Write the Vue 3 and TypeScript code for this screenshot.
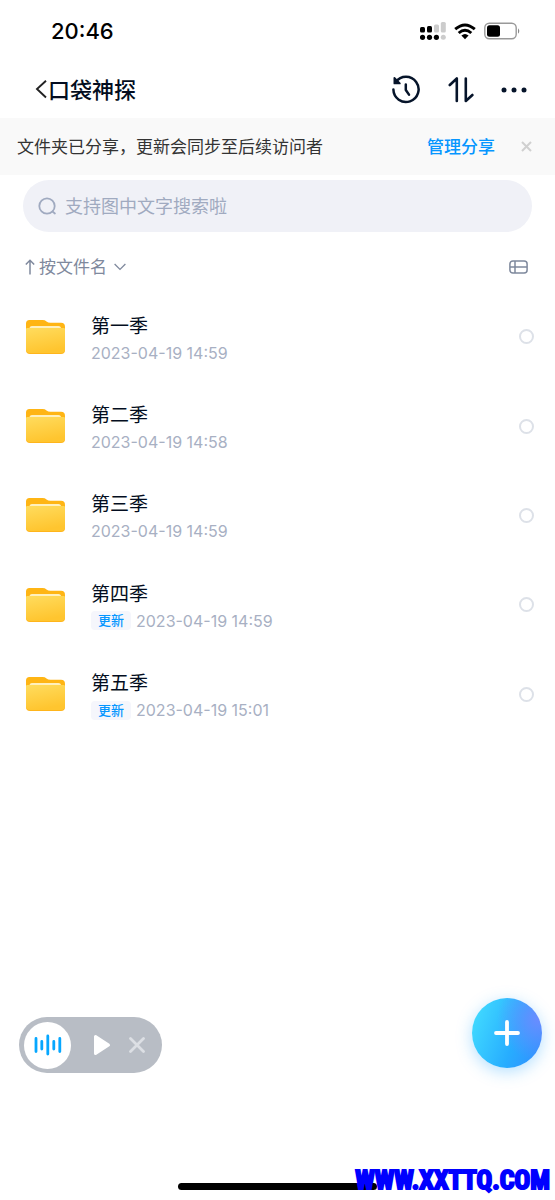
<script setup lang="ts">
import { ref } from 'vue'

interface Folder {
  name: string
  date: string
  updated: boolean
}

const folders: Folder[] = [
  { name: '第一季', date: '2023-04-19 14:59', updated: false },
  { name: '第二季', date: '2023-04-19 14:58', updated: false },
  { name: '第三季', date: '2023-04-19 14:59', updated: false },
  { name: '第四季', date: '2023-04-19 14:59', updated: true },
  { name: '第五季', date: '2023-04-19 15:01', updated: true },
]

const selected = ref<string[]>([])
const keyword = ref('')
const sortBy = ref('name')
</script>

<template>
  <div class="page">
    <div class="status">
      <time class="clock">20:46</time>
      <div class="signals">
        <svg width="26" height="18" viewBox="0 0 26 18" aria-hidden="true">
          <g fill="#000">
            <rect x="0" y="5" width="5" height="5.5" rx="1.5" />
            <rect x="7" y="4" width="5" height="6.5" rx="1.5" />
            <circle cx="2.5" cy="15.3" r="2.6" />
            <circle cx="9.5" cy="15.3" r="2.6" />
            <circle cx="16.4" cy="15.3" r="2.6" />
          </g>
          <g fill="#ccc">
            <rect x="14" y="2.5" width="5" height="8" rx="1.5" />
            <rect x="20.8" y="0" width="5" height="10.5" rx="1.5" />
            <circle cx="23.3" cy="15.3" r="2.5" />
          </g>
        </svg>
        <svg width="22" height="17" viewBox="0 0 22 17" aria-hidden="true">
          <g fill="none" stroke="#000" stroke-width="2.9">
            <path d="M1.2 6.2Q11 -2.4 20.8 6.2" />
            <path d="M4.7 10Q11 4.4 17.3 10" />
          </g>
          <path d="M7.4 12.5Q11 9.4 14.6 12.5L11 16.3Z" fill="#000" />
        </svg>
        <svg width="36" height="18" viewBox="0 0 36 18" aria-hidden="true">
          <rect x="0.8" y="1.2" width="31.4" height="15.6" rx="4.5" fill="#fff" stroke="#999" stroke-width="1.4" />
          <rect x="3" y="3.2" width="13" height="11.6" rx="2.5" fill="#000" />
          <path d="M34 6.2Q36.6 9 34 11.8Z" fill="#888" />
        </svg>
      </div>
    </div>

    <header class="header">
      <button class="icon-btn" type="button" aria-label="返回">
        <svg width="13" height="20" viewBox="0 0 13 20" fill="none" stroke="#222" stroke-width="1.9">
          <path d="M11 0.800L2 9l9 8.500" />
        </svg>
      </button>
      <h1 class="title">口袋神探</h1>
      <div class="actions">
        <button class="icon-btn" type="button" aria-label="历史记录">
          <svg width="30" height="30" viewBox="0 0 30 30" fill="none" stroke="#06142a" stroke-width="2.500" stroke-linecap="round" stroke-linejoin="round">
            <path d="M4.800 7A12.600 12.600 0 1 1 2.400 14.600" />
            <path d="M3.400 3v5.400h5.400z" fill="#06142a" stroke-width="1.800" />
            <path d="M14.800 9.400v5.600l3.200 4.600" />
          </svg>
        </button>
        <button class="icon-btn" type="button" aria-label="传输列表">
          <svg width="26" height="26" viewBox="0 0 26 26" fill="none" stroke="#06142a" stroke-width="2.600" stroke-linecap="round" stroke-linejoin="round">
            <path d="M1.800 8L8.800 1.500v22.500" />
            <path d="M17.800 1.500v22.500l6.600-6" />
          </svg>
        </button>
        <button class="icon-btn" type="button" aria-label="更多">
          <svg width="26" height="6" viewBox="0 0 26 6" fill="#06142a">
            <circle cx="3" cy="3" r="2.500" />
            <circle cx="13" cy="3" r="2.500" />
            <circle cx="23" cy="3" r="2.500" />
          </svg>
        </button>
      </div>
    </header>

    <div class="notice">
      <span class="notice-text">文件夹已分享，更新会同步至后续访问者</span>
      <a class="notice-link" href="#share">管理分享</a>
      <button class="icon-btn" type="button" aria-label="关闭提示">
        <svg width="11" height="11" viewBox="0 0 11 11" stroke="#d0d0d0" stroke-width="2">
          <path d="M1 1l9 9M10 1l-9 9" />
        </svg>
      </button>
    </div>

    <label class="search">
      <svg width="19" height="19" viewBox="0 0 19 19" fill="none" stroke="#a0aac0" stroke-width="1.800" stroke-linecap="round">
        <circle cx="9" cy="9" r="7.700" />
        <path d="M14.500 14.500l2.400 2" />
      </svg>
      <input v-model="keyword" class="search-input" type="text" aria-label="搜索" placeholder="支持图中文字搜索啦" />
    </label>

    <div class="toolbar">
      <svg width="10" height="16" viewBox="0 0 10 16" fill="none" stroke="#7f899d" stroke-width="1.500">
        <path d="M5 15.500V1.500M0.800 5.500L5 1.300l4.200 4.200" />
      </svg>
      <select v-model="sortBy" class="sort" aria-label="排序方式">
        <option value="name">按文件名</option>
      </select>
      <svg class="chevron" width="12" height="8" viewBox="0 0 12 8" fill="none" stroke="#7f899d" stroke-width="1.300">
        <path d="M0.600 1l5.400 5.400L11.400 1" />
      </svg>
      <button class="icon-btn view" type="button" aria-label="切换视图">
        <svg width="19" height="14" viewBox="0 0 19 14" fill="none" stroke="#7f899d" stroke-width="1.500">
          <rect x="0.900" y="0.900" width="17.200" height="12.200" rx="3" />
          <path d="M6 1v12M1 7h17" />
        </svg>
      </button>
    </div>

    <ul class="list">
      <li v-for="(folder, i) in folders" :key="folder.name">
        <label class="row" :for="`folder-${i}`">
          <svg class="folder" width="40" height="36" viewBox="0 0 40 36" aria-hidden="true">
            <defs>
              <linearGradient :id="`front-${i}`" x1="0" y1="0" x2="0.300" y2="1">
                <stop offset="0" stop-color="#ffdc5e" />
                <stop offset="1" stop-color="#ffc52f" />
              </linearGradient>
            </defs>
            <path d="M1 4.500Q1 1 4.500 1H17.500Q20 1 21.500 2.400Q23 3.800 25.500 3.800H36Q40 3.800 40 8V20H1Z" fill="#ffb514" />
            <path d="M4.500 11V9.500Q4.500 7 7 7H33.500Q36 7 36 9.500V11Z" fill="#fff0bd" />
            <path d="M1 10Q1 9 2.500 9H38.500Q40 9 40 10V31Q40 35 36 35H5Q1 35 1 31Z" fill="#ffb51b" />
            <path d="M1 10Q1 9 2.500 9H38.500Q40 9 40 10V30Q40 34 36 34H5Q1 34 1 30Z" :fill="`url(#front-${i})`" />
          </svg>
          <span class="info">
            <span class="name">{{ folder.name }}</span>
            <span class="meta">
              <span v-if="folder.updated" class="badge">更新</span>
              <time>{{ folder.date }}</time>
            </span>
          </span>
          <input :id="`folder-${i}`" v-model="selected" class="check" type="checkbox" :value="folder.name" />
        </label>
      </li>
    </ul>

    <div class="player">
      <button class="wave" type="button" aria-label="正在播放">
        <svg width="28" height="22" viewBox="0 0 28 22" stroke="#06a7ff" stroke-width="2.800" stroke-linecap="round">
          <path d="M2 4.500v13M7.800 7.500v7.500M13.800 2v18M19.800 7.500v7.500M25.800 4.500v13" />
        </svg>
      </button>
      <button class="icon-btn" type="button" aria-label="播放">
        <svg width="18" height="22" viewBox="0 0 18 22" fill="#fff" stroke="#fff" stroke-width="3" stroke-linejoin="round">
          <path d="M2.500 2.500v17L15.500 11z" />
        </svg>
      </button>
      <button class="icon-btn" type="button" aria-label="关闭播放器">
        <svg width="16" height="16" viewBox="0 0 16 16" stroke="#dcdfe4" stroke-width="2.800" stroke-linecap="round">
          <path d="M1.500 1.500l13 13M14.500 1.500l-13 13" />
        </svg>
      </button>
    </div>

    <button class="add" type="button" aria-label="新建">
      <svg width="26" height="26" viewBox="0 0 26 26" stroke="#fff" stroke-width="3.800" stroke-linecap="round">
        <path d="M13 2v22M2 13h22" />
      </svg>
    </button>

    <div class="home-bar"></div>
    <div class="watermark">WWW.XXTTQ.COM</div>
  </div>
</template>

<style>
body {
  margin: 0;
  background: #fff;
}
</style>

<style scoped>
.page {
  position: relative;
  box-sizing: border-box;
  min-height: 100vh;
  overflow: hidden;
  background: #fff;
  color: #030d20;
  font-family: Inter, "Noto Sans CJK SC", sans-serif;
}

button,
input,
select {
  margin: 0;
  padding: 0;
  border: 0;
  background: none;
  font-family: inherit;
}

svg {
  display: block;
  flex: none;
}

.icon-btn {
  display: flex;
  cursor: pointer;
}

.status {
  display: flex;
  align-items: center;
  justify-content: space-between;
  height: 62px;
  padding: 0 35px 0 51px;
}

.clock {
  color: #000;
  font-size: 22px;
  font-weight: 500;
  line-height: 28px;
}

.signals {
  display: flex;
  align-items: center;
  gap: 8px;
}

.header {
  display: flex;
  align-items: center;
  height: 56px;
  padding: 0 28px 0 35px;
}

.title {
  flex: 1;
  margin: 0;
  font-size: 22px;
  font-weight: 500;
  line-height: 32px;
}

.actions {
  display: flex;
  align-items: center;
  gap: 27px;
}

.notice {
  display: flex;
  align-items: center;
  height: 57px;
  padding: 0 23px 0 17px;
  background: #f9f9f9;
  font-size: 17px;
  line-height: 24px;
}

.notice-text {
  flex: 1;
  color: #333;
}

.notice-link {
  margin-right: 26px;
  color: #0696ff;
  font-weight: 500;
  text-decoration: none;
}

.search {
  display: flex;
  align-items: center;
  gap: 8px;
  height: 52px;
  margin: 5px 23px 0;
  padding: 0 15px;
  box-sizing: border-box;
  border-radius: 26px;
  background: #f0f1f7;
}

.search-input {
  flex: 1;
  min-width: 0;
  padding-top: 2px;
  outline: 0;
  color: #030d20;
  font-size: 18px;
  line-height: 28px;
}

.search-input::placeholder {
  color: #a0aac0;
  opacity: 1;
}

.toolbar {
  display: flex;
  align-items: center;
  height: 60px;
  margin-top: 5px;
  padding: 0 27px 0 25px;
}

.sort {
  margin-left: 4px;
  padding-right: 19px;
  appearance: none;
  outline: 0;
  color: #7f899d;
  font-size: 17px;
  line-height: 24px;
}

.chevron {
  margin-left: -12px;
  pointer-events: none;
}

.view {
  margin-left: auto;
}

.list {
  display: grid;
  grid-auto-rows: 1fr;
  min-height: 447px;
  margin: -5px 0 0;
  padding: 0;
  list-style: none;
}

.row {
  display: flex;
  align-items: center;
  box-sizing: border-box;
  height: 100%;
  padding: 0 21px 0 25px;
}

.info {
  display: flex;
  flex: 1;
  flex-direction: column;
  margin-left: 26px;
  padding-top: 4px;
}

.name {
  font-size: 19px;
  line-height: 28px;
}

.meta {
  display: flex;
  align-items: center;
  gap: 5px;
  color: #a8b0c3;
  font-size: 16px;
  line-height: 24px;
}

.badge {
  padding: 0 7px;
  border-radius: 4px;
  background: #f5f6fc;
  color: #0696ff;
  font-size: 13px;
  font-weight: 500;
  line-height: 19px;
}

.check {
  width: 15px;
  height: 15px;
  box-sizing: border-box;
  border: 2px solid #dde1e8;
  border-radius: 50%;
  appearance: none;
}

.check:checked {
  background: #06a7ff;
}

.player {
  position: absolute;
  bottom: 127px;
  left: 19px;
  display: flex;
  align-items: center;
  box-sizing: border-box;
  height: 56px;
  padding: 0 17px 0 5px;
  gap: 18px;
  border-radius: 28px;
  background: #b8bdc5;
}

.wave {
  display: flex;
  align-items: center;
  justify-content: center;
  width: 47px;
  height: 47px;
  margin-right: 4px;
  border-radius: 50%;
  background: #fff;
}

.add {
  position: absolute;
  right: 13px;
  bottom: 132px;
  display: flex;
  align-items: center;
  justify-content: center;
  width: 70px;
  height: 70px;
  border-radius: 50%;
  background:
    radial-gradient(circle at 95% 30%, #6a8cff 0%, transparent 50%),
    linear-gradient(110deg, #42dcff 5%, #27adff 60%, #2f93ff 90%);
  box-shadow: 0 4px 16px rgba(40, 165, 255, 0.35);
}

.home-bar {
  position: absolute;
  right: 0;
  bottom: 10px;
  left: 0;
  width: 36%;
  height: 7px;
  margin: 0 auto;
  border-radius: 4px;
  background: #000;
}

.watermark {
  position: absolute;
  right: 5px;
  bottom: 4px;
  color: #00f;
  font-family: Impact, "Roboto Condensed", "Open Sans Condensed", "Liberation Sans Narrow", "DejaVu Sans Condensed", sans-serif;
  font-size: 26px;
  font-weight: 700;
  line-height: 32px;
  -webkit-text-stroke: 2px #00f;
}
</style>
